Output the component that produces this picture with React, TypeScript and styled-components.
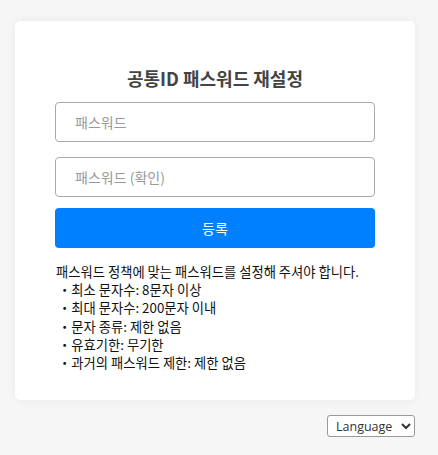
import React from "react";
import styled, { createGlobalStyle } from "styled-components";

const GlobalStyle = createGlobalStyle`
  html, body {
    margin: 0;
    padding: 0;
    background: #f6f6f6;
    font-family: "Noto Sans CJK KR", "Noto Sans", sans-serif;
  }
`;

const rules = [
  "최소 문자수: 8문자 이상",
  "최대 문자수: 200문자 이내",
  "문자 종류: 제한 없음",
  "유효기한: 무기한",
  "과거의 패스워드 제한: 제한 없음",
];

export default function App() {
  return (
    <>
      <GlobalStyle />
      <Page>
        <Card>
          <Title>공통ID 패스워드 재설정</Title>
          <Form>
            <Input type="password" placeholder="패스워드" />
            <Input type="password" placeholder="패스워드 (확인)" />
            <SubmitButton type="button">등록</SubmitButton>
          </Form>
          <Policy>
            <p>패스워드 정책에 맞는 패스워드를 설정해 주셔야 합니다.</p>
            <ul>
              {rules.map((r) => (
                <li key={r}>{r}</li>
              ))}
            </ul>
          </Policy>
        </Card>
        <Footer>
          <LangSelect defaultValue="">
            <option value="">Language</option>
            <option value="ko">한국어</option>
            <option value="en">English</option>
            <option value="ja">日本語</option>
          </LangSelect>
        </Footer>
      </Page>
    </>
  );
}

const Page = styled.div`
  width: 400px;
  padding: 21px 0 0 15px;
`;

const Card = styled.div`
  background: #fff;
  border-radius: 5px;
  box-shadow: 0 0 8px rgba(0, 0, 0, 0.06);
  padding: 45px 40px 28px;
`;

const Title = styled.h1`
  margin: 0 0 12px;
  text-align: center;
  font-size: 18px;
  line-height: 24px;
  font-weight: 700;
  color: #444;
`;

const Form = styled.div`
  display: flex;
  flex-direction: column;
`;

const Input = styled.input`
  box-sizing: border-box;
  height: 40px;
  margin-bottom: 15px;
  padding: 0 19px;
  border: 1px solid #aaa;
  border-radius: 4px;
  font-family: inherit;
  font-size: 14px;
  color: #333;
  outline: none;

  &::placeholder {
    color: #999;
  }
`;

const SubmitButton = styled.button`
  height: 40px;
  margin-top: -4px;
  border: none;
  border-radius: 4px;
  background: #0080ff;
  color: #fff;
  font-family: inherit;
  font-size: 14px;
  cursor: pointer;
`;

const Policy = styled.div`
  margin-top: 15px;
  font-size: 13.3px;
  line-height: 18.2px;
  color: #111;

  p {
    margin: 0;
    padding-left: 1px;
  }

  ul {
    margin: 0;
    padding: 0;
    list-style: none;
  }

  li {
    padding-left: 3px;
  }

  li::before {
    content: "・";
  }
`;

const Footer = styled.div`
  display: flex;
  justify-content: flex-end;
  margin-top: 15px;
`;

const LangSelect = styled.select`
  height: 22px;
  width: 88px;
  padding: 0 4px;
  border: 1px solid #999;
  border-radius: 3px;
  background: #fff;
  font-family: "Open Sans", "Noto Sans", sans-serif;
  font-size: 12.5px;
  color: #333;
`;
